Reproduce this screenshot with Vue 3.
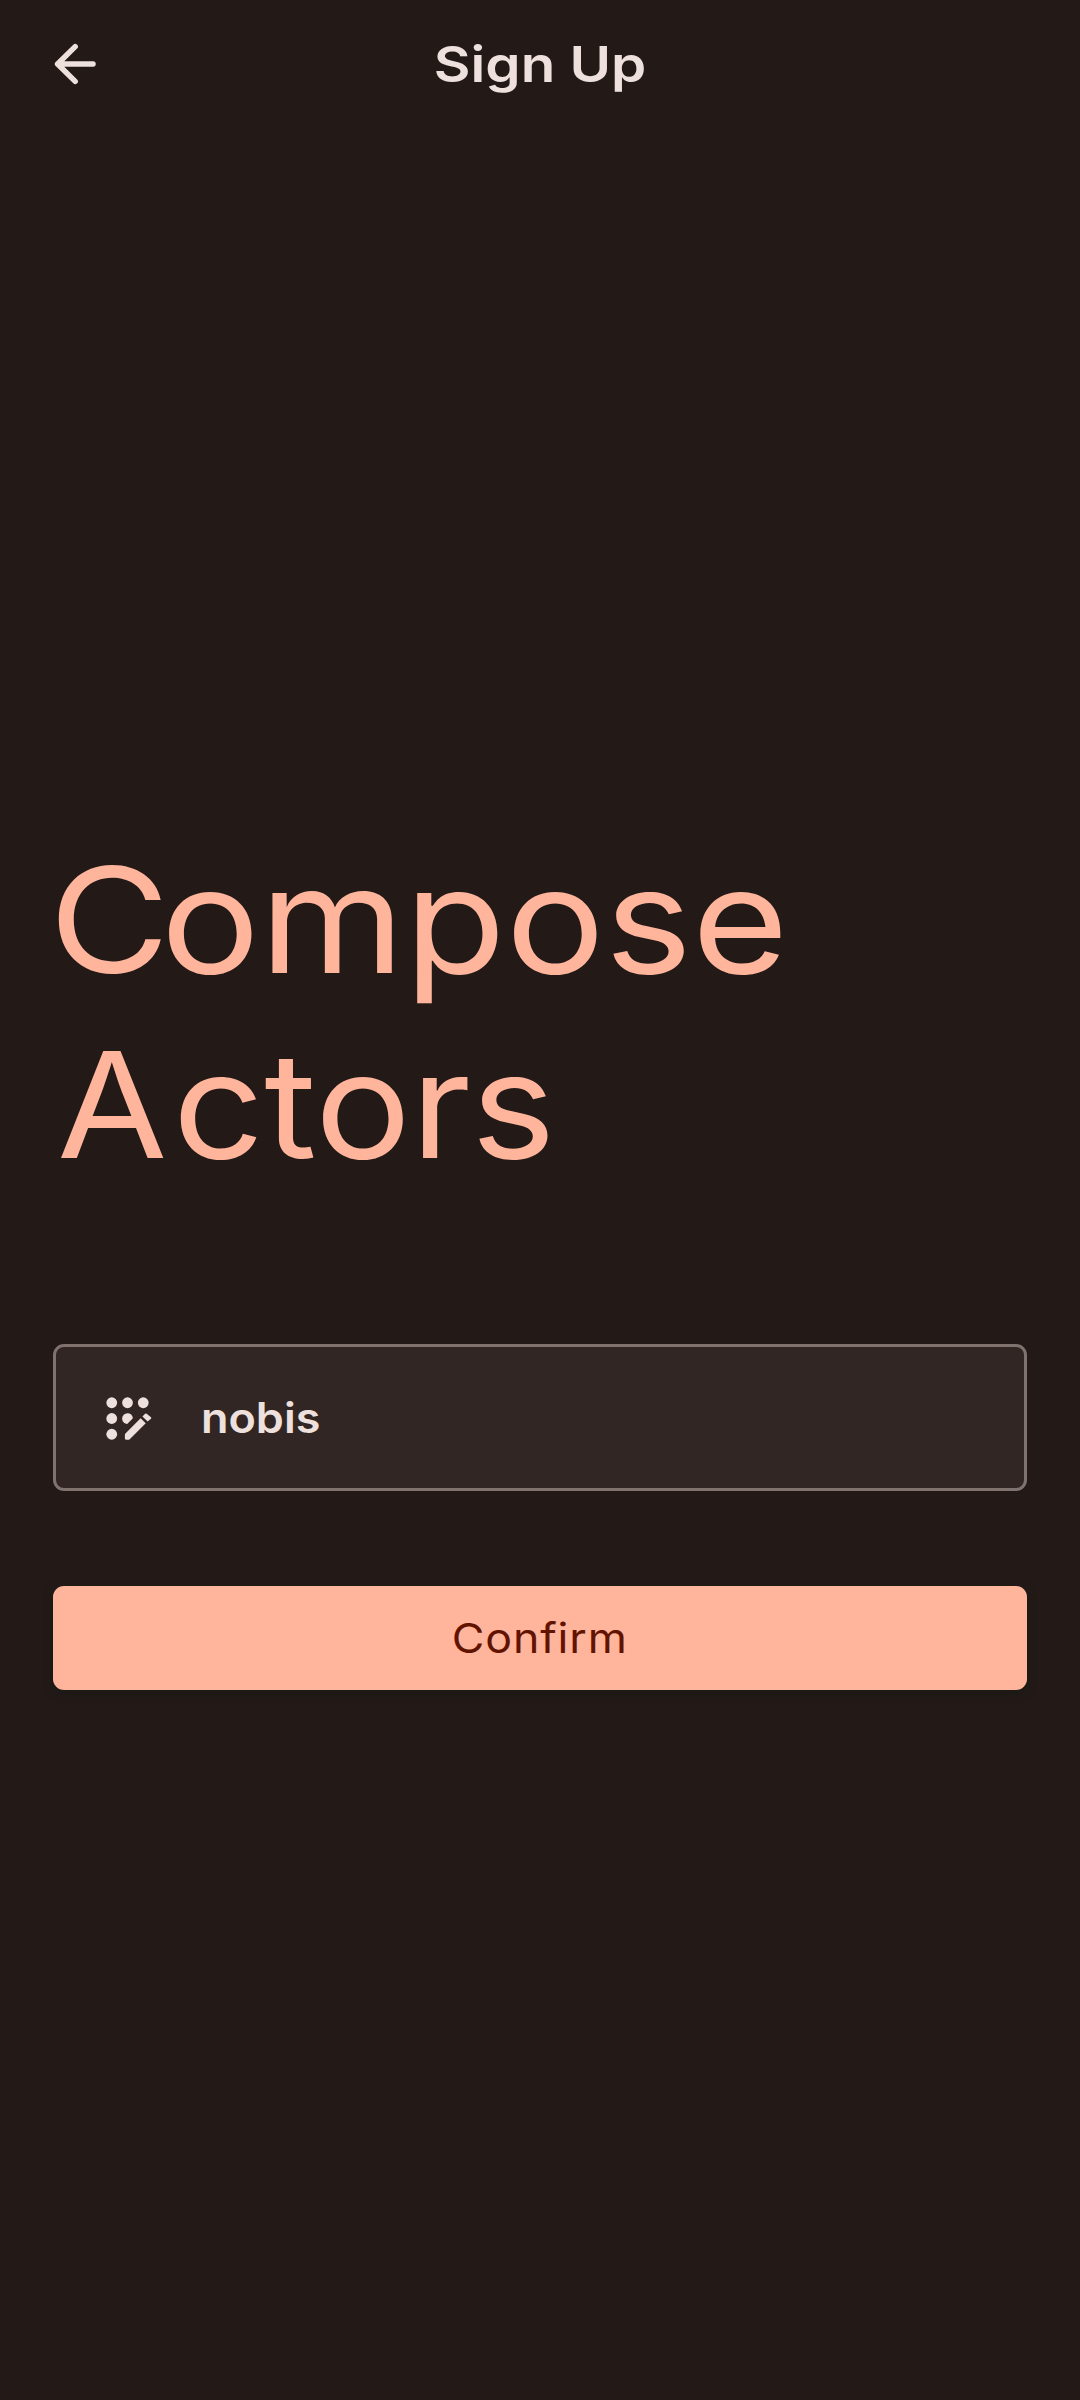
<script setup>
import { ref } from 'vue'

const name = ref('nobis')
const dots = [
  [6, 6],
  [12, 6],
  [18, 6],
  [6, 12],
  [6, 18],
]
</script>

<template>
  <div class="screen">
    <header class="bar">
      <button class="back" aria-label="Back">
        <svg width="44" height="44" viewBox="0 0 44 44" fill="none">
          <path d="M22.2 4.6 4.6 22 22.2 39.4M4.6 22H40" />
        </svg>
      </button>
      <h1 class="title"><span>Sign Up</span></h1>
      <div class="side"></div>
    </header>

    <main class="body">
      <h2 class="brand">
        <span class="line compose"><span class="cap">C</span>ompose</span>
        <span class="line actors"><span class="cap">A</span>ctors</span>
      </h2>

      <div class="field">
        <svg class="glyph" width="63" height="63" viewBox="0 0 24 24">
          <circle v-for="[x, y] in dots" :key="`${x}-${y}`" :cx="x" :cy="y" r="2.05" />
          <path d="M11.9 14.05A2.05 2.05 0 1 1 14.05 11.9Z" />
          <path d="M11 18.5V19.65Q11 20.05 11.4 20.05H12.5Q12.75 20.05 12.95 19.85L18.95 13.85L17 11.9L11.12 17.8Q11 18 11 18.5Z" />
          <path d="M19.65 13.15 17.7 11.2 18.7 10.2Q19 9.9 19.3 10.2L20.95 11.55Q21.2 11.85 20.95 12.1Z" />
        </svg>
        <span class="value">{{ name }}</span>
      </div>

      <button class="confirm"><span>Confirm</span></button>
    </main>
  </div>
</template>

<style>
body {
  background: #231a18;
}
</style>

<style scoped>
.screen {
  display: flex;
  flex-direction: column;
  height: 2400px;
  box-sizing: border-box;
  background: #231a18;
  color: #ede0dd;
  font-family: Inter, "Open Sans", sans-serif;
  overflow: hidden;
}
button {
  border: 0;
  padding: 0;
  background: none;
  color: inherit;
  font-family: inherit;
}
.bar {
  display: flex;
  align-items: center;
  height: 127px;
  padding: 0 53px;
}
.back,
.side {
  display: flex;
  width: 44px;
  height: 44px;
}
.back path {
  stroke: #ede0dd;
  stroke-width: 5.5;
  stroke-linecap: round;
  stroke-linejoin: round;
}
.title {
  flex: 1;
  margin: 0;
  font-size: 50px;
  line-height: 64px;
  font-weight: 600;
  text-align: center;
}
.title span {
  display: inline-block;
  transform: scaleX(1.13);
}
.body {
  display: flex;
  flex-direction: column;
  padding: 700px 53px 0;
}
.brand {
  margin: 0;
  color: #ffb49c;
  font-size: 147px;
  line-height: 185px;
  font-weight: 400;
}
.line {
  display: block;
  transform-origin: left;
}
.compose {
  margin-left: -4px;
  transform: scaleX(1.124);
}
.compose .cap {
  letter-spacing: -8px;
}
.actors {
  margin-left: 4px;
  transform: scaleX(1.088);
}
.actors .cap {
  letter-spacing: 5px;
}
.field {
  display: flex;
  align-items: center;
  height: 147px;
  margin-top: 147px;
  box-sizing: border-box;
  padding-left: 40px;
  border: 3px solid #80736f;
  border-radius: 11px;
  background: #322624;
}
.glyph {
  margin-top: 2px;
  fill: #ede0dd;
}
.value {
  margin-left: 42px;
  font-size: 42px;
  font-weight: 600;
  transform: scaleX(1.07);
  transform-origin: left;
}
.confirm {
  height: 104px;
  margin-top: 95px;
  border-radius: 11px;
  background: #ffb49c;
  color: #611300;
  font-size: 41px;
  font-weight: 400;
  box-shadow: 0 3px 8px 1px rgba(20, 23, 18, 0.5);
}
.confirm span {
  display: inline-block;
  letter-spacing: 0.8px;
  transform: scaleX(1.09);
}
</style>
